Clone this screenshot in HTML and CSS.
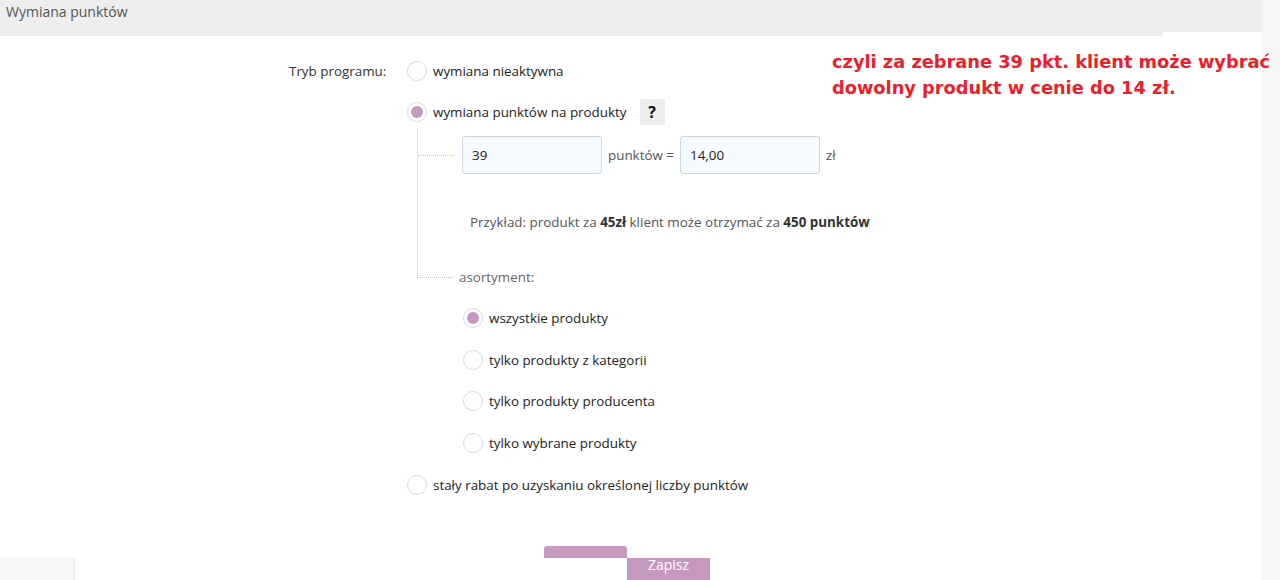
FILE: index.html
```html
<!DOCTYPE html>
<html lang="pl">
<head>
<meta charset="utf-8">
<title>Wymiana punktów</title>
<link rel="stylesheet" href="styles.css">
</head>
<body>
<div class="page">
  <div class="header">Wymiana punktów</div>
  <div class="form">
    <div class="field-label">Tryb programu:</div>
    <div class="options">
      <label class="opt"><span class="radio"></span><span>wymiana nieaktywna</span></label>
      <label class="opt"><span class="radio checked"></span><span>wymiana punktów na produkty</span><span class="help">?</span></label>
      <div class="tree">
        <div class="tree-top">
          <div class="inputs-row">
            <span class="branch"></span>
            <span class="input">39</span>
            <span class="unit">punktów =</span>
            <span class="input">14,00</span>
            <span class="unit">zł</span>
          </div>
          <div class="example">Przykład: produkt za <b>45zł</b> klient może otrzymać za <b>450 punktów</b></div>
        </div>
        <div class="tree-last">
          <span class="elbow"></span>
          <span class="sub-label">asortyment:</span>
        </div>
        <div class="subopts">
          <label class="opt sub"><span class="radio checked"></span><span>wszystkie produkty</span></label>
          <label class="opt sub"><span class="radio"></span><span>tylko produkty z kategorii</span></label>
          <label class="opt sub"><span class="radio"></span><span>tylko produkty producenta</span></label>
          <label class="opt sub"><span class="radio"></span><span>tylko wybrane produkty</span></label>
        </div>
      </div>
      <label class="opt"><span class="radio"></span><span>stały rabat po uzyskaniu określonej liczby punktów</span></label>
    </div>
  </div>
  <div class="footer">
    <div class="side-box"></div>
    <div class="actions">
      <span class="btn btn-top"></span>
      <span class="btn btn-save">Zapisz</span>
    </div>
  </div>
  <div class="right-strip"></div>
  <div class="note-tab"></div>
  <div class="note">czyli za zebrane 39 pkt. klient może wybrać<br>dowolny produkt w cenie do 14 zł.</div>
</div>
</body>
</html>
```
FILE: styles.css
```css
* { box-sizing: border-box; }
html, body { margin: 0; padding: 0; }
body {
  width: 1280px;
  height: 580px;
  overflow: hidden;
  background: #fff;
  font-family: "Open Sans", "Noto Sans", sans-serif;
  font-size: 13.4px;
  color: #222;
}
.page { position: relative; width: 1280px; height: 580px; }

.header {
  height: 36px;
  background: #eeeeee;
  padding-left: 6px;
  font-size: 14px;
  line-height: 24px;
  color: #555;
}

.form {
  display: flex;
  padding-top: 14px;
  padding-left: 289px;
}
.field-label {
  width: 118px;
  height: 41px;
  display: flex;
  align-items: center;
  color: #333;
}
.options { display: flex; flex-direction: column; }

.opt {
  display: flex;
  align-items: center;
  height: 41px;
  gap: 6px;
  color: #222;
  white-space: nowrap;
}
.opt.sub { height: 41.5px; }

.radio {
  width: 20px;
  height: 20px;
  border-radius: 50%;
  border: 1px solid #d3dbe6;
  background: #fff;
  display: flex;
  align-items: center;
  justify-content: center;
  flex: none;
}
.radio.checked::after {
  content: "";
  width: 12px;
  height: 12px;
  border-radius: 50%;
  background: #c898c0;
}

.help {
  margin-left: 7px;
  width: 25px;
  height: 26px;
  background: #eeeeee;
  display: flex;
  align-items: center;
  justify-content: center;
  font-weight: 700;
  font-size: 16px;
  color: #111;
}

.tree { margin-left: 10px; margin-top: -4px; }
.tree-top {
  border-left: 1px dotted #bfc6cc;
  padding-top: 8px;
  padding-bottom: 35px;
}
.inputs-row {
  display: flex;
  align-items: center;
  height: 38px;
}
.branch {
  width: 36px;
  border-top: 1px dotted #bfc6cc;
  margin-right: 8px;
}
.input {
  width: 140px;
  height: 38px;
  border: 1px solid #c9d7e6;
  border-radius: 3px;
  background: #f6fbff;
  padding-left: 9px;
  display: flex;
  align-items: center;
  color: #222;
}
.unit {
  color: #555;
  padding: 0 6px 0 6px;
}
.example {
  margin-top: 38px;
  margin-left: 52px;
  line-height: 20px;
  color: #555;
}
.example b { color: #333; }

.tree-last {
  display: flex;
  align-items: flex-start;
  height: 20px;
}
.elbow {
  width: 36px;
  height: 11px;
  border-left: 1px dotted #bfc6cc;
  border-bottom: 1px dotted #bfc6cc;
  margin-right: 6px;
}
.sub-label { line-height: 20px; color: #666; }

.subopts {
  margin-left: 46px;
  margin-top: 10.5px;
  margin-bottom: 1px;
}

.footer {
  display: flex;
  margin-top: 40px;
}
.side-box {
  width: 75px;
  height: 22px;
  margin-top: 12px;
  background: #f6f6f6;
  border-right: 1px solid #e8e8e8;
}
.actions {
  display: flex;
  align-items: flex-start;
  margin-left: 469px;
}
.btn { display: block; width: 83px; background: #c798bd; }
.btn-top { height: 12px; border-radius: 3px 3px 0 0; }
.btn-save {
  height: 22px;
  margin-top: 12px;
  color: #fff;
  font-size: 14px;
  line-height: 14px;
  text-align: center;
}

.right-strip {
  position: absolute;
  right: 0;
  top: 0;
  width: 18px;
  height: 580px;
  background: #f7f7f7;
}
.note-tab {
  position: absolute;
  left: 1163px;
  top: 32px;
  width: 99px;
  height: 4px;
  background: #fff;
}
.note {
  position: absolute;
  left: 832px;
  top: 49px;
  font-family: "DejaVu Sans", sans-serif;
  font-weight: 700;
  font-size: 17.8px;
  line-height: 26px;
  color: #ee1d2a;
  white-space: nowrap;
}
```
